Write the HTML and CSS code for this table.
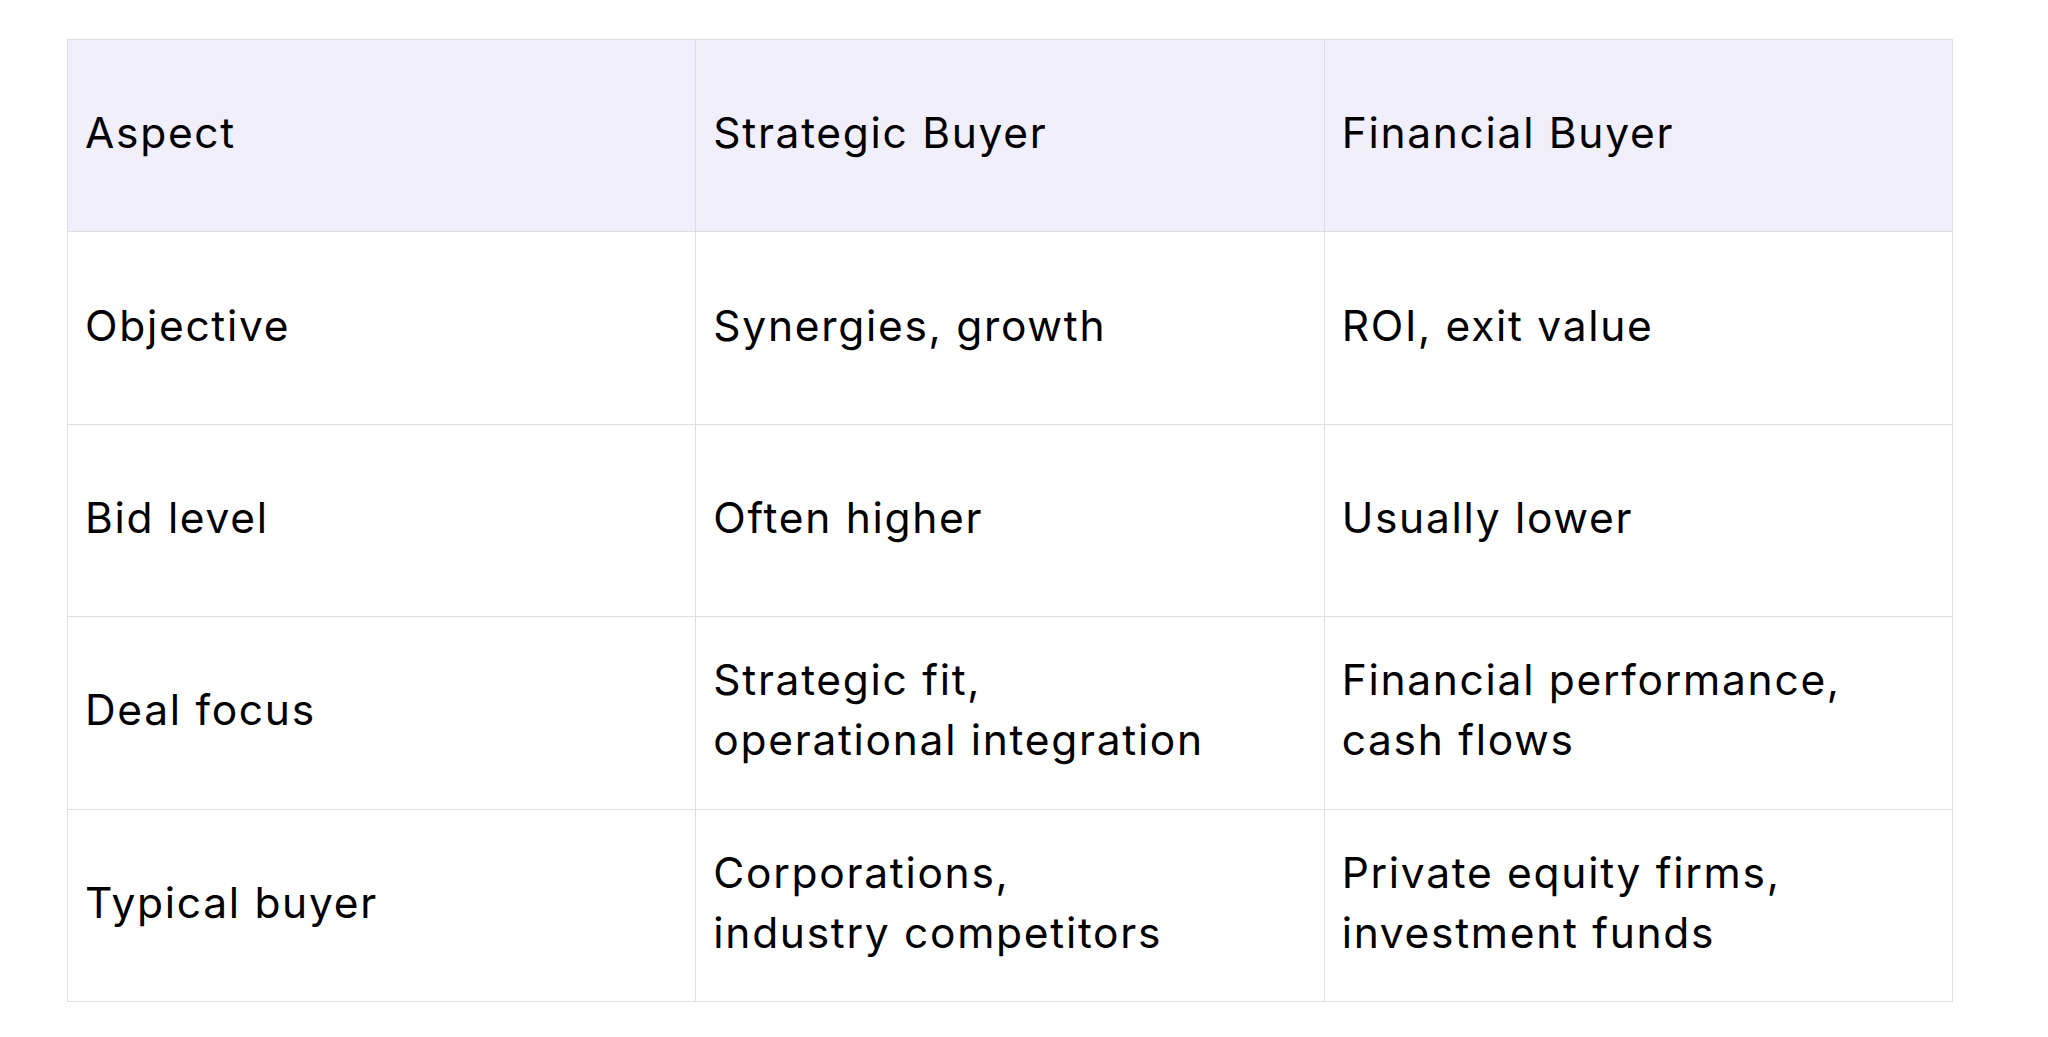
FILE: index.html
```html
<!DOCTYPE html>
<html lang="en">
<head>
<meta charset="utf-8">
<title>Strategic vs Financial Buyer</title>
<link rel="stylesheet" href="styles.css">
</head>
<body>
<div class="page">
  <table class="compare">
    <thead>
      <tr>
        <th>Aspect</th>
        <th>Strategic Buyer</th>
        <th>Financial Buyer</th>
      </tr>
    </thead>
    <tbody>
      <tr>
        <td>Objective</td>
        <td>Synergies, growth</td>
        <td>ROI, exit value</td>
      </tr>
      <tr>
        <td>Bid level</td>
        <td>Often higher</td>
        <td>Usually lower</td>
      </tr>
      <tr>
        <td>Deal focus</td>
        <td>Strategic fit,<br>operational integration</td>
        <td>Financial performance,<br>cash flows</td>
      </tr>
      <tr>
        <td>Typical buyer</td>
        <td>Corporations,<br>industry competitors</td>
        <td>Private equity firms,<br>investment funds</td>
      </tr>
    </tbody>
  </table>
</div>
</body>
</html>
```
FILE: styles.css
```css
html, body {
  margin: 0;
  padding: 0;
  background: #ffffff;
}

.page {
  padding: 39px 0 0 67px;
}

.compare {
  width: 1886px;
  border-collapse: collapse;
  table-layout: fixed;
  font-family: "Inter", "Roboto", sans-serif;
  font-size: 42.5px;
  line-height: 60px;
  letter-spacing: 1.7px;
  color: #000000;
}

.compare tr {
  height: 192.4px;
}

.compare th,
.compare td {
  border: 1px solid #dedede;
  padding: 0 16px 5px 17px;
  text-align: left;
  vertical-align: middle;
  font-weight: 400;
}

.compare thead th {
  background: #f0effb;
}
```
